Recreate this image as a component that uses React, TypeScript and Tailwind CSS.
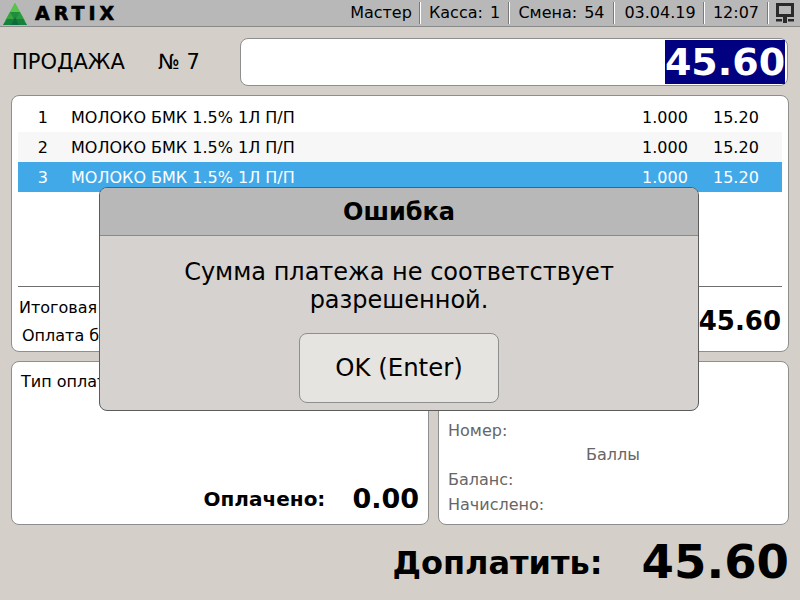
import React from 'react';

const font = { fontFamily: '"DejaVu Sans", sans-serif' };

const rows = [
  { n: 1, bg: 'bg-white text-black' },
  { n: 2, bg: 'bg-[#f7f7f7] text-black' },
  { n: 3, bg: 'bg-[#42a9e9] text-white' },
];

const Logo = () => (
  <svg width="24" height="23" viewBox="0 0 24 23" className="ml-[3px]">
    <polygon points="12,1 24,23 0,23" fill="#3fb03c" />
    <polygon points="12,1 17,10 7,10" fill="#55c648" />
    <polygon points="7,10 12,19 2,19" fill="#35a53c" />
    <polygon points="17,10 22,19 12,19" fill="#2b9a40" />
    <polygon points="7,10 17,10 12,19" fill="#1f8c3e" />
    <polygon points="4,17 20,17 24,23 0,23" fill="#17803f" />
    <polygon points="12,15 16,23 8,23" fill="#0f6b3a" />
  </svg>
);

const Cell = ({ children, w }: { children: React.ReactNode; w: string }) => (
  <div className={`flex h-[22px] items-center justify-center border-r border-white ${w}`}>
    <div className="flex h-full w-full items-center justify-center border-r border-[#7a7a7a]">{children}</div>
  </div>
);

const App = () => {
  return (
    <div style={font} className="relative flex h-[600px] w-[800px] flex-col overflow-hidden bg-[#d4d0c9] text-black">

      {/* Header */}
      <div className="flex h-[27px] items-center border-b border-[#8a8a8a] bg-[#b8b8b8]">
        <Logo />
        <div className="ml-[8px] text-[19px] font-bold tracking-[4px] [-webkit-text-stroke:0.6px_black]">ARTIX</div>
        <div className="ml-auto flex items-center text-[16px]">
          <Cell w="w-[78px]">Мастер</Cell>
          <Cell w="w-[89px]">Касса:<span className="ml-[7px]">1</span></Cell>
          <Cell w="w-[105px]">Смена:<span className="ml-[7px]">54</span></Cell>
          <Cell w="w-[90px]"><span className="ml-[2px]">03.04.19</span></Cell>
          <Cell w="w-[64px]">12:07</Cell>
          <div className="flex w-[31px] justify-center">
            <svg width="18" height="20" viewBox="0 0 18 20">
              <rect x="1.5" y="1.5" width="15" height="11" fill="none" stroke="#2a2a2a" strokeWidth="3" />
              <rect x="7" y="13" width="4" height="7" fill="#2a2a2a" />
              <rect x="0" y="16" width="6" height="2.5" fill="#2a2a2a" />
              <rect x="12" y="16" width="6" height="2.5" fill="#2a2a2a" />
            </svg>
          </div>
        </div>
      </div>

      {/* Sale line */}
      <div className="mt-[11px] flex h-[48px] items-center pr-[12px] pl-[12px]">
        <div className="w-[146px] pt-[2px] text-[21px]">ПРОДАЖА</div>
        <div className="w-[82px] pt-[2px] text-[21px]">№ 7</div>
        <div className="flex h-[48px] flex-1 items-center justify-end rounded-[8px] border border-[#8e8e8e] bg-white pr-[2px]">
          <div className="flex h-[44px] w-[120px] items-center justify-center bg-[#000080] text-[38px] font-bold text-white">45.60</div>
        </div>
      </div>

      {/* Receipt */}
      <div className="mx-[11px] mt-[9px] flex h-[257px] flex-col rounded-[8px] border border-[#8e8e8e] bg-white px-[6px] pt-[6px]">
        <div className="h-[184px]">
          {rows.map((r) => (
            <div key={r.n} className={`flex h-[30px] items-center pt-[1px] text-[16px] ${r.bg}`}>
              <div className="w-[53px] text-right"><span className="mr-[23px] inline-block">{r.n}</span></div>
              <div className="w-[569px]">МОЛОКО БМК 1.5% 1Л П/П</div>
              <div className="w-[50px] text-center">1.000</div>
              <div className="ml-[23px] w-[60px]">15.20</div>
            </div>
          ))}
        </div>
        <div className="border-t border-[#6e6e6e]" />
        <div className="flex h-[62px] items-center justify-between pt-[6px] pr-[1px] pl-[1px]">
          <div className="pt-[2px] text-[16px] leading-[28px]">
            <div>Итоговая сумма</div>
            <div className="pl-[3px]">Оплата бонусами</div>
          </div>
          <div className="text-[26px] font-bold">45.60</div>
        </div>
      </div>

      {/* Bottom panels */}
      <div className="mx-[11px] mt-[9px] flex h-[164px] gap-[9px]">
        <div className="flex w-[418px] flex-col rounded-[8px] border border-[#8e8e8e] bg-white px-[9px] pt-[8px]">
          <div className="text-[16px]">Тип оплаты</div>
          <div className="mt-auto mb-[5px] flex items-center justify-end">
            <div className="text-[20px] font-bold">Оплачено:</div>
            <div className="ml-[27px] text-[27px] font-bold">0.00</div>
          </div>
        </div>
        <div className="flex flex-1 flex-col rounded-[8px] border border-[#8e8e8e] bg-white px-[9px] pt-[57px] text-[16px] text-[#666]">
          <div>Номер:</div>
          <div className="pl-[138px]">Баллы</div>
          <div className="mt-[1px]">Баланс:</div>
          <div className="mt-[1px]">Начислено:</div>
        </div>
      </div>

      {/* Total */}
      <div className="mt-[3px] flex items-center justify-end pr-[11px]">
        <div className="mr-[-1px] text-[32px] font-bold">Доплатить:</div>
        <div className="ml-[40px] text-[46.6px] font-bold">45.60</div>
      </div>

      {/* Error dialog */}
      <div className="absolute top-[187px] left-[99px] flex h-[224px] w-[600px] flex-col overflow-hidden rounded-[8px] border border-[#5c5c5c] bg-[#d6d2cf]">
        <div className="flex h-[48px] items-center justify-center border-b border-[#8a8a8a] bg-[#b8b8b8] text-[24px] font-bold">Ошибка</div>
        <div className="mt-[22px] text-center text-[24px] leading-[28px]">
          <div>Сумма платежа не соответствует</div>
          <div>разрешенной.</div>
        </div>
        <div className="mt-[19px] flex justify-center">
          <button className="h-[70px] w-[200px] rounded-[8px] border border-[#8e8e8e] bg-[#e6e4e1] text-[24.4px]">OK (Enter)</button>
        </div>
      </div>
    </div>
  );
};

export default App;
